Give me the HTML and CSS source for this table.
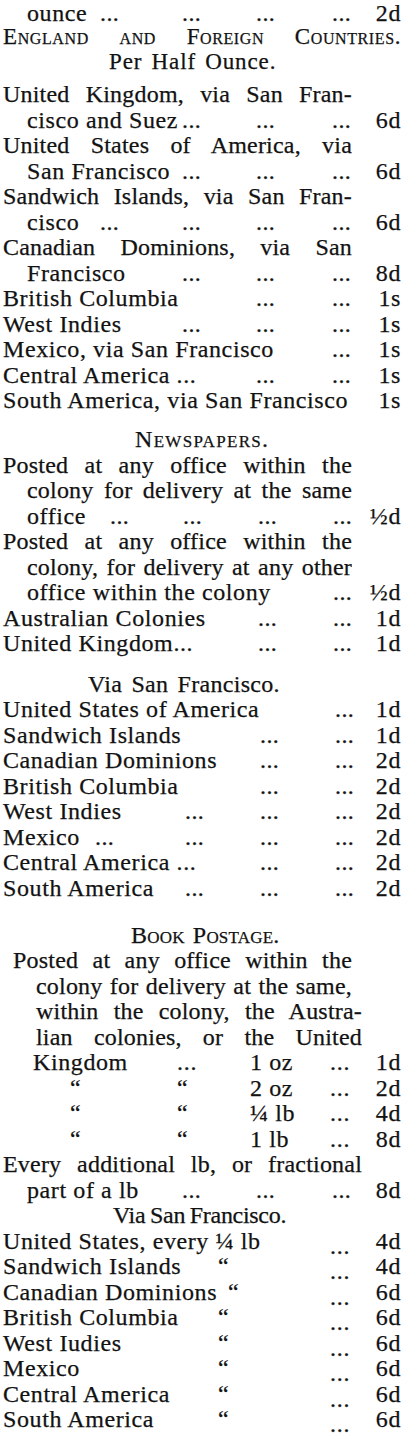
FILE: index.html
```html
<!DOCTYPE html>
<html lang="en">
<head>
<meta charset="utf-8">
<title>Postage Rates</title>
<link rel="stylesheet" href="styles.css">
</head>
<body>
<div class="page">
  <div class="ln g first"><span class="l1 ind">ounce</span><span class="d">...</span><span class="d">...</span><span class="d">...</span><span class="d">...</span><span class="p">2d</span></div>
  <div class="ln head-wide">England and Foreign Countries.</div>
  <div class="ln sub sub-half">Per Half Ounce.</div>

  <div class="section sec-eng">
    <div class="ln just">United Kingdom, via San Fran-</div>
    <div class="ln g"><span class="l2 ind">cisco and Suez</span><span class="d">...</span><span class="d">...</span><span class="d">...</span><span class="p">6d</span></div>
    <div class="ln just">United States of America, via</div>
    <div class="ln g"><span class="l2 ind">San Francisco</span><span class="d">...</span><span class="d">...</span><span class="d">...</span><span class="p">6d</span></div>
    <div class="ln just">Sandwich Islands, via San Fran-</div>
    <div class="ln g"><span class="l1 ind">cisco</span><span class="d">...</span><span class="d">...</span><span class="d">...</span><span class="d">...</span><span class="p">6d</span></div>
    <div class="ln just">Canadian Dominions, via San</div>
    <div class="ln g"><span class="l2 ind">Francisco</span><span class="d">...</span><span class="d">...</span><span class="d">...</span><span class="p">8d</span></div>
    <div class="ln g"><span class="l3">British Columbia</span><span class="d">...</span><span class="d">...</span><span class="p">1s</span></div>
    <div class="ln g"><span class="l2">West Indies</span><span class="d">...</span><span class="d">...</span><span class="d">...</span><span class="p">1s</span></div>
    <div class="ln g"><span class="l4">Mexico, via San Francisco</span><span class="d">...</span><span class="p">1s</span></div>
    <div class="ln g"><span class="l3">Central America ...</span><span class="d">...</span><span class="d">...</span><span class="p">1s</span></div>
    <div class="ln g"><span class="l5">South America, via San Francisco</span><span class="p">1s</span></div>
  </div>

  <div class="ln sub sub-news">Newspapers.</div>
  <div class="section sec-news">
    <div class="ln just">Posted at any office within the</div>
    <div class="ln just ind">colony for delivery at the same</div>
    <div class="ln g"><span class="l1 ind">office</span><span class="d">...</span><span class="d">...</span><span class="d">...</span><span class="d">...</span><span class="p">½d</span></div>
    <div class="ln just">Posted at any office within the</div>
    <div class="ln just ind">colony, for delivery at any other</div>
    <div class="ln g"><span class="l4 ind">office within the colony</span><span class="d">...</span><span class="p">½d</span></div>
    <div class="ln g"><span class="l3">Australian Colonies</span><span class="d">...</span><span class="d">...</span><span class="p">1d</span></div>
    <div class="ln g"><span class="l3">United Kingdom...</span><span class="d">...</span><span class="d">...</span><span class="p">1d</span></div>
  </div>

  <div class="ln sub sub-via">Via San Francisco.</div>
  <div class="section sec-via">
    <div class="ln g"><span class="l4">United States of America</span><span class="d">...</span><span class="p">1d</span></div>
    <div class="ln g"><span class="l3">Sandwich Islands</span><span class="d">...</span><span class="d">...</span><span class="p">1d</span></div>
    <div class="ln g"><span class="l3">Canadian Dominions</span><span class="d">...</span><span class="d">...</span><span class="p">2d</span></div>
    <div class="ln g"><span class="l3">British Columbia</span><span class="d">...</span><span class="d">...</span><span class="p">2d</span></div>
    <div class="ln g"><span class="l2">West Indies</span><span class="d">...</span><span class="d">...</span><span class="d">...</span><span class="p">2d</span></div>
    <div class="ln g"><span class="l1">Mexico</span><span class="d">...</span><span class="d">...</span><span class="d">...</span><span class="d">...</span><span class="p">2d</span></div>
    <div class="ln g"><span class="l3">Central America ...</span><span class="d">...</span><span class="d">...</span><span class="p">2d</span></div>
    <div class="ln g"><span class="l2">South America</span><span class="d">...</span><span class="d">...</span><span class="d">...</span><span class="p">2d</span></div>
  </div>

  <div class="ln sub sub-book">Book Postage.</div>
  <div class="section sec-book">
    <div class="ln just book-first">Posted at any office within the</div>
    <div class="ln just book-cont">colony for delivery at the same,</div>
    <div class="ln just book-cont wide">within the colony, the Austra-</div>
    <div class="ln just book-cont wide">lian colonies, or the United</div>
    <div class="ln tab"><span class="t1">Kingdom</span><span class="t2">...</span><span class="t3">1 oz</span><span class="t4">...</span><span class="p">1d</span></div>
    <div class="ln tab"><span class="t1 ditto">“</span><span class="t2">“</span><span class="t3">2 oz</span><span class="t4">...</span><span class="p">2d</span></div>
    <div class="ln tab"><span class="t1 ditto">“</span><span class="t2">“</span><span class="t3">¼ lb</span><span class="t4">...</span><span class="p">4d</span></div>
    <div class="ln tab"><span class="t1 ditto">“</span><span class="t2">“</span><span class="t3">1 lb</span><span class="t4">...</span><span class="p">8d</span></div>
    <div class="ln just wide">Every additional lb, or fractional</div>
    <div class="ln g"><span class="l2 ind">part of a lb</span><span class="d">...</span><span class="d">...</span><span class="d">...</span><span class="p">8d</span></div>
  </div>

  <div class="ln sub sub-via2">Via San Francisco.</div>
  <div class="section">
    <div class="ln dt"><span class="q-wide">United States, every ¼ lb</span><span class="q-dots">...</span><span class="p">4d</span></div>
    <div class="ln dt"><span class="q-lbl">Sandwich Islands</span><span class="q-dit">“</span><span class="q-dots">...</span><span class="p">4d</span></div>
    <div class="ln dt"><span class="q-lbl">Canadian Dominions</span><span class="q-dit q-gap">“</span><span class="q-dots">...</span><span class="p">6d</span></div>
    <div class="ln dt"><span class="q-lbl">British Columbia</span><span class="q-dit">“</span><span class="q-dots">...</span><span class="p">6d</span></div>
    <div class="ln dt"><span class="q-lbl">West Iudies</span><span class="q-dit">“</span><span class="q-dots">...</span><span class="p">6d</span></div>
    <div class="ln dt"><span class="q-lbl">Mexico</span><span class="q-dit">“</span><span class="q-dots">...</span><span class="p">6d</span></div>
    <div class="ln dt"><span class="q-lbl">Central America</span><span class="q-dit">“</span><span class="q-dots">...</span><span class="p">6d</span></div>
    <div class="ln dt"><span class="q-lbl">South America</span><span class="q-dit">“</span><span class="q-dots">...</span><span class="p">6d</span></div>
  </div>
</div>
</body>
</html>
```

FILE: styles.css
```css
* {
  box-sizing: border-box;
}

html,
body {
  margin: 0;
  padding: 0;
  background: #ffffff;
}

body {
  font-family: "Liberation Serif", "Times New Roman", serif;
  font-size: 24px;
  color: #121212;
  letter-spacing: 0.6px;
  -webkit-text-stroke: 0.25px #121212;
}

.page {
  width: 413px;
  padding: 0 12px 0 3px;
}

.ln {
  height: 25.5px;
  line-height: 25.5px;
  white-space: nowrap;
}

.ln.first {
  height: 23.5px;
  line-height: 26.6px;
}

/* leader rows on tab stops */
.g {
  display: grid;
  grid-template-columns: 97px 82px 74px 76px 34px 35px;
}

.sec-news .g {
  grid-template-columns: 107px 73px 75px 75px 35px 33px;
}

.sec-via .g {
  grid-template-columns: 92px 90px 75px 75px 33px 33px;
}

.l1 { grid-column: span 1; }
.l2 { grid-column: span 2; }
.l3 { grid-column: span 3; }
.l4 { grid-column: span 4; }
.l5 { grid-column: span 5; }

.d {
  letter-spacing: 0.4px;
}

.p {
  text-align: right;
}

.ind {
  padding-left: 24px;
}

/* justified text lines */
.just {
  width: 349px;
  text-align: justify;
  text-align-last: justify;
  white-space: normal;
  overflow: hidden;
  letter-spacing: 0.2px;
}

.just.wide {
  width: 359px;
}

.book-first {
  padding-left: 10px;
}

.book-cont {
  padding-left: 33px;
}

/* headings */
.head-wide {
  font-size: 23px;
  font-variant: small-caps;
  text-align: justify;
  text-align-last: justify;
  white-space: normal;
}

.sub-half {
  font-size: 23px;
  padding-left: 106px;
  letter-spacing: 0.9px;
  word-spacing: 2.5px;
}

.sec-eng {
  margin-top: 7.5px;
}

.sub-news {
  margin-top: 13.5px;
  padding-left: 132px;
  font-variant: small-caps;
  letter-spacing: 1.3px;
}

.sub-via {
  margin-top: 15px;
  padding-left: 85px;
  letter-spacing: 0.3px;
  word-spacing: 3px;
}

.sub-book {
  margin-top: 21.5px;
  padding-left: 128px;
  font-variant: small-caps;
  letter-spacing: 0.2px;
  word-spacing: 2px;
}

.sub-via2 {
  padding-left: 110px;
  letter-spacing: -0.3px;
  word-spacing: -1px;
}

/* tabular rows (book postage weights) */
.tab {
  display: grid;
  grid-template-columns: 174px 73px 80px 36px 35px;
}

.t1 {
  padding-left: 30px;
}

.t1.ditto {
  padding-left: 67px;
}

.t2,
.t4 {
  letter-spacing: 0.8px;
}

/* ditto rows (via San Francisco, book post) */
.dt {
  display: grid;
  grid-template-columns: 215px 112px 36px 35px;
}

.q-wide {
  grid-column: span 2;
}

.q-gap {
  padding-left: 10px;
}

.q-dots {
  padding-top: 5px;
  letter-spacing: 0.8px;
}
```
